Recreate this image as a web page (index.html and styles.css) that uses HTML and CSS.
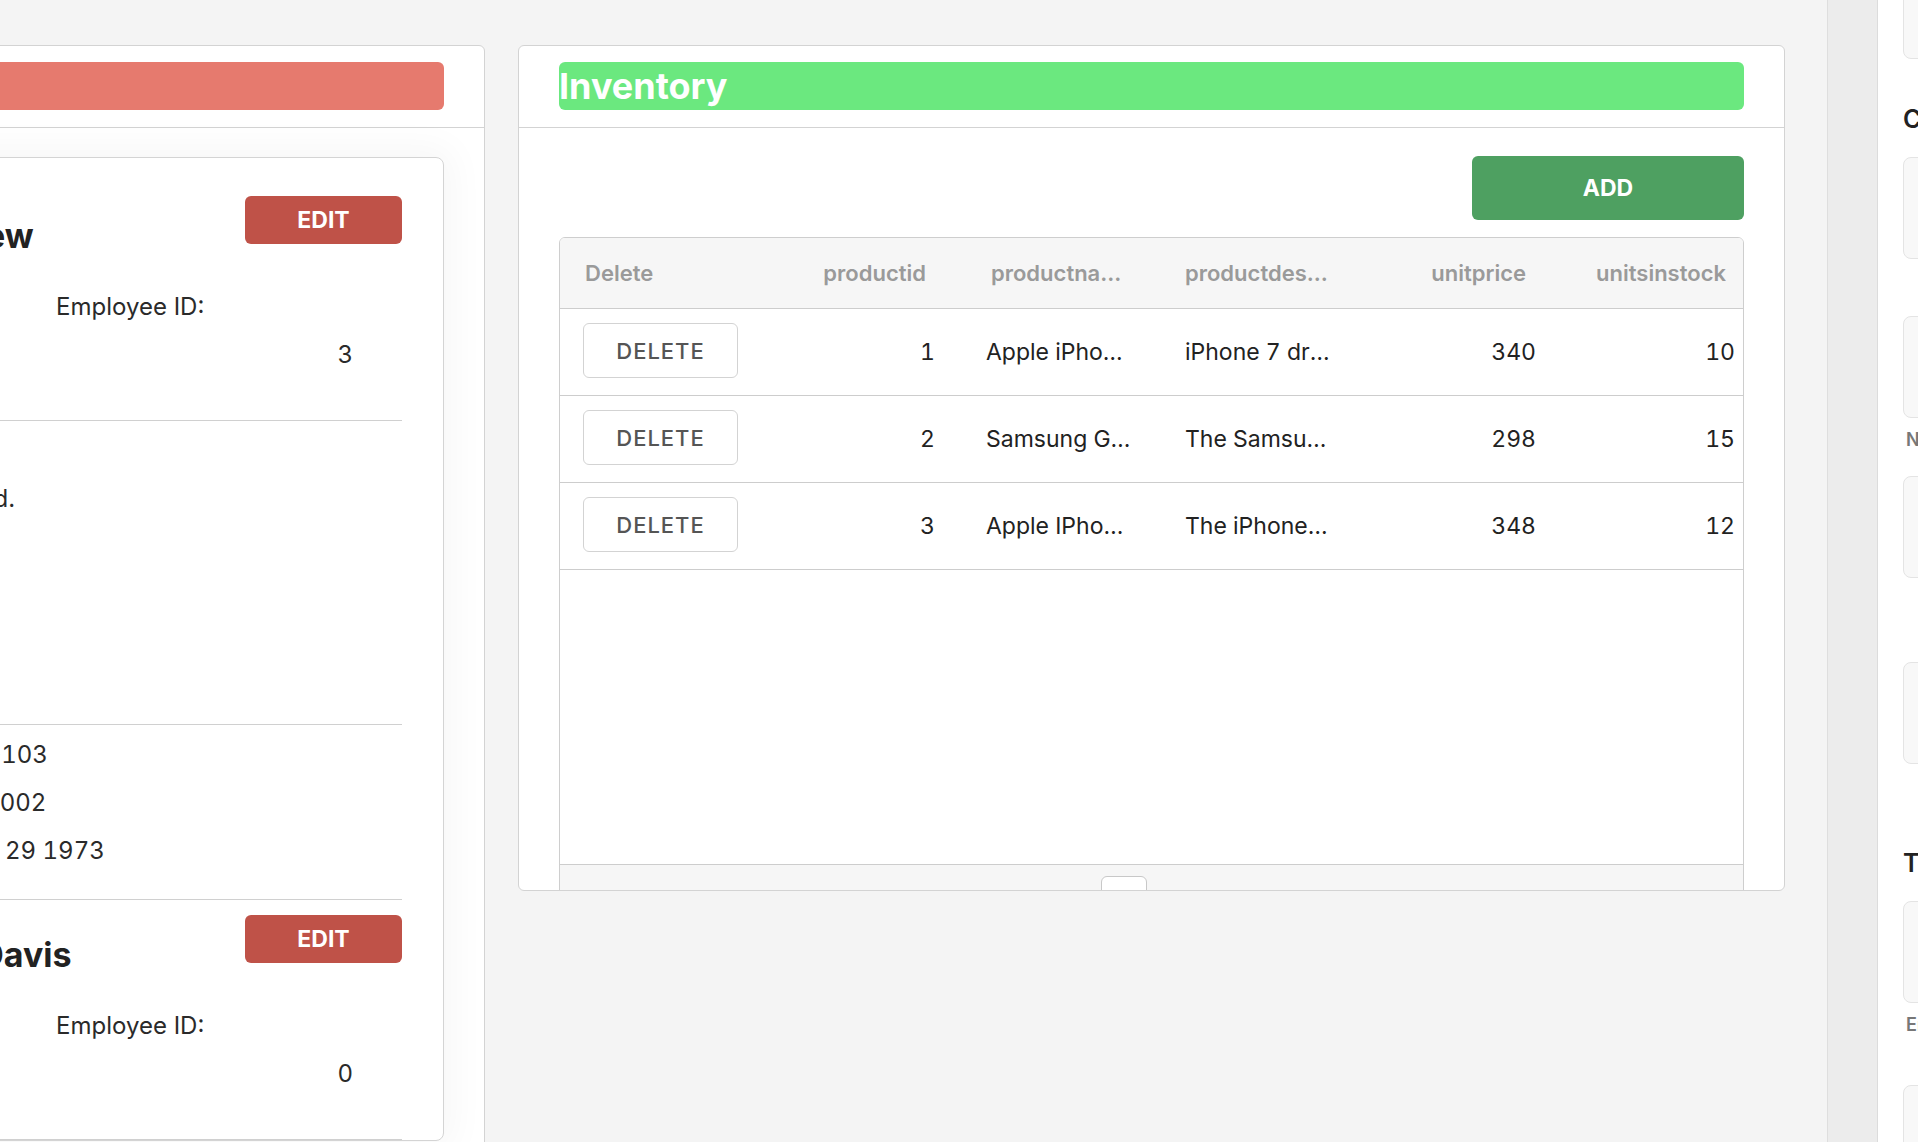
FILE: index.html
```html
<!DOCTYPE html>
<html lang="en">
<head>
<meta charset="utf-8">
<title>Dashboard</title>
<link rel="stylesheet" href="styles.css">
</head>
<body>
<div class="app">
  <main class="workspace">
    <section class="panel panel-employees">
      <header class="panel-head">
        <h2 class="panel-title red">Staff</h2>
      </header>
      <div class="panel-body">
        <div class="card">
          <article class="entry">
            <div class="entry-head">
              <h3 class="emp-name">Andrew</h3>
              <button class="btn btn-edit">EDIT</button>
            </div>
            <div class="emp-id"><span class="lbl">Employee ID:</span><span class="val">3</span></div>
            <hr class="rule">
            <div class="emp-notes"><p>Received.</p></div>
            <hr class="rule">
            <div class="emp-contact">
              <p>Office: 0103</p>
              <p>Home: 0002</p>
              <p>Thu Mar 29 1973</p>
            </div>
            <hr class="rule">
          </article>
          <article class="entry">
            <div class="entry-head">
              <h3 class="emp-name">Lisa Davis</h3>
              <button class="btn btn-edit">EDIT</button>
            </div>
            <div class="emp-id"><span class="lbl">Employee ID:</span><span class="val">0</span></div>
            <hr class="rule">
          </article>
        </div>
      </div>
    </section>

    <section class="panel panel-inventory">
      <header class="panel-head">
        <h2 class="panel-title green">Inventory</h2>
      </header>
      <div class="panel-body inv-body">
        <div class="toolbar"><button class="btn btn-add">ADD</button></div>
        <div class="grid">
          <div class="grid-row grid-header">
            <div class="c c1"><span class="t">Delete</span></div>
            <div class="c c2 num"><span class="t">productid</span></div>
            <div class="c c3"><span class="t">productname</span></div>
            <div class="c c4"><span class="t">productdescription</span></div>
            <div class="c c5 num"><span class="t">unitprice</span></div>
            <div class="c c6 num"><span class="t">unitsinstock</span></div>
          </div>
          <div class="grid-body">
            <div class="grid-row">
              <div class="c c1"><button class="btn btn-del">DELETE</button></div>
              <div class="c c2 num"><span class="t">1</span></div>
              <div class="c c3"><span class="t">Apple iPhone 7</span></div>
              <div class="c c4"><span class="t">iPhone 7 dramatically improves the most important aspects of the iPhone experience.</span></div>
              <div class="c c5 num"><span class="t">340</span></div>
              <div class="c c6 num"><span class="t">10</span></div>
            </div>
            <div class="grid-row">
              <div class="c c1"><button class="btn btn-del">DELETE</button></div>
              <div class="c c2 num"><span class="t">2</span></div>
              <div class="c c3"><span class="t">Samsung Galaxy S8</span></div>
              <div class="c c4"><span class="t">The Samsung Galaxy S8 is a smartphone with an infinity display.</span></div>
              <div class="c c5 num"><span class="t">298</span></div>
              <div class="c c6 num"><span class="t">15</span></div>
            </div>
            <div class="grid-row">
              <div class="c c1"><button class="btn btn-del">DELETE</button></div>
              <div class="c c2 num"><span class="t">3</span></div>
              <div class="c c3"><span class="t">Apple IPhone 8</span></div>
              <div class="c c4"><span class="t">The iPhone 8 introduces an all-new glass design.</span></div>
              <div class="c c5 num"><span class="t">348</span></div>
              <div class="c c6 num"><span class="t">12</span></div>
            </div>
          </div>
          <div class="grid-foot"><span class="thumb"></span></div>
        </div>
      </div>
    </section>
  </main>

  <div class="splitter"></div>

  <aside class="sidebar">
    <div class="sidebar-inner">
      <input class="field" aria-label="Notes">
      <h4 class="form-heading">Contact</h4>
      <input class="field" aria-label="Company">
      <input class="field field-gap" aria-label="Phone">
      <p class="helper">Numbers only</p>
      <input class="field field-gap2" aria-label="Address">
      <input class="field field-gap3" aria-label="City">
      <h4 class="form-heading heading-gap">Territory</h4>
      <input class="field" aria-label="Region">
      <p class="helper">Enter a region code</p>
      <input class="field field-gap4" aria-label="Postal code">
    </div>
  </aside>
</div>
</body>
</html>
```

FILE: styles.css
```css
* { box-sizing: border-box; }

html, body {
  margin: 0;
  padding: 0;
  height: 100%;
  overflow: hidden;
}

body {
  background: #f4f4f4;
  font-family: Inter, "Noto Sans", "Liberation Sans", sans-serif;
  color: #222;
}

.app {
  display: flex;
  align-items: stretch;
  height: 100vh;
  margin-left: -182px;
  width: max-content;
}

.workspace {
  width: 2009px;
  flex: none;
  padding: 45px 42px 0 0;
  display: flex;
  gap: 33px;
  align-items: flex-start;
}

/* panels */
.panel {
  background: #fff;
  border: 1px solid #d3d3d3;
  border-radius: 6px;
  overflow: hidden;
  flex: none;
}

.panel-employees { width: 667px; height: 1200px; }
.panel-inventory { width: 1267px; height: 846px; }

.panel-head {
  padding: 16px 40px 17px;
  border-bottom: 1px solid #d3d3d3;
}

.panel-title {
  margin: 0;
  height: 48px;
  border-radius: 6px;
  color: #fff;
  font-size: 36px;
  font-weight: 700;
  line-height: 48px;
  white-space: nowrap;
  overflow: hidden;
}

.panel-title.red { background: #e67a6e; }
.panel-title.green { background: #6be87f; }

.panel-body { padding: 29px 40px 0; }

/* employee card */
.card {
  border: 1px solid #d4d4d4;
  border-radius: 8px;
  background: #fff;
  padding: 23px 41px 0 44px;
  box-shadow: 0 0 36px 10px rgba(0, 0, 0, 0.035);
  font-size: 24px;
  line-height: 48px;
  color: #2a2a2a;
}

.entry { padding-top: 15px; }

.entry-head {
  display: flex;
  justify-content: space-between;
  align-items: flex-start;
  height: 60px;
}

.emp-name {
  margin: 20px 0 0;
  font-size: 34px;
  font-weight: 700;
  line-height: 40px;
  color: #222;
  white-space: nowrap;
}

.btn {
  font-family: inherit;
  cursor: pointer;
  border-radius: 6px;
}

.btn-edit {
  width: 157px;
  height: 48px;
  border: none;
  background: #bf5248;
  color: #fff;
  font-size: 23px;
  font-weight: 700;
  padding: 0;
}

.emp-id {
  margin: 27px 0 0 152px;
  width: 297px;
  display: flex;
  flex-direction: column;
}

.emp-id .val { text-align: right; font-variant-numeric: tabular-nums; }

.rule {
  margin: 41px 0 0;
  border: none;
  border-top: 1px solid #d0d0d0;
  height: 0;
}

.emp-notes {
  min-height: 303px;
  padding-top: 54px;
}

.emp-notes p, .emp-contact p { margin: 0; white-space: nowrap; }

.emp-contact p { font-variant-numeric: tabular-nums; }

.emp-notes + .rule { margin-top: 0; }

.emp-contact { padding: 6px 0 24px; }

.emp-contact + .rule { margin-top: 0; }

/* inventory */
.inv-body { padding: 28px 40px 0; }

.toolbar {
  display: flex;
  justify-content: flex-end;
}

.btn-add {
  width: 272px;
  height: 64px;
  border: none;
  background: #4ea061;
  color: #fff;
  font-size: 23px;
  font-weight: 700;
  padding: 0;
}

.grid {
  margin-top: 17px;
  width: 1185px;
  border: 1px solid #cecece;
  border-radius: 6px;
  overflow: hidden;
  font-size: 23px;
}

.grid-row {
  display: grid;
  grid-template-columns: 241px 175px 199px 200px 171px 197px;
  height: 87px;
  border-bottom: 1px solid #cdcdcd;
  align-items: center;
}

.grid-header {
  height: 71px;
  background: #f6f6f6;
  color: #9a9a9a;
  font-size: 22px;
  font-weight: 600;
  border-bottom: 1px solid #cdcdcd;
}

.grid-body { height: 555px; }

.c {
  min-width: 0;
  display: flex;
  align-items: center;
  height: 100%;
}

.c .t {
  display: block;
  white-space: nowrap;
  overflow: hidden;
  text-overflow: ellipsis;
  min-width: 0;
}

.grid-body .t { font-variant-numeric: tabular-nums; }

.num { justify-content: flex-end; }

.c1 { padding-left: 23px; }
.c2 { padding-right: 41px; }
.c3 { padding-left: 10px; padding-right: 41px; }
.c4 { padding-left: 10px; padding-right: 43px; }
.c5 { padding-right: 10px; }
.c6 { padding-right: 8px; }

.grid-header .c1 { padding-left: 25px; }
.grid-header .c2 { padding-right: 50px; }
.grid-header .c3 { padding-left: 15px; padding-right: 42px; }
.grid-header .c4 { padding-left: 10px; padding-right: 45px; }
.grid-header .c5 { padding-right: 20px; }
.grid-header .c6 { padding-right: 17px; }

.grid-body .grid-row { color: #222; }

.btn-del {
  width: 155px;
  height: 55px;
  margin-top: -3px;
  background: #fff;
  border: 1px solid #d3d3d3;
  color: #555;
  font-size: 22px;
  font-weight: 500;
  letter-spacing: 1px;
  padding: 0;
}

.grid-foot {
  border-top: 1px solid #cdcdcd;
  background: #f6f6f6;
  height: 70px;
  padding: 11px 0 0 541px;
}

.thumb {
  display: block;
  width: 46px;
  height: 30px;
  background: #fff;
  border: 1px solid #c8c8c8;
  border-radius: 6px;
}

/* splitter + sidebar */
.splitter {
  flex: none;
  width: 51px;
  background: #ececec;
  border-left: 1px solid #dedede;
  border-right: 1px solid #dcdcdc;
}

.sidebar {
  flex: none;
  width: 420px;
  background: #fff;
  padding: 0 24px 0 25px;
}

.sidebar-inner {
  margin-top: -43px;
  display: flex;
  flex-direction: column;
}

.field {
  display: block;
  width: 100%;
  height: 102px;
  border: 1px solid #e4e4e4;
  border-radius: 8px;
  background: #f8f8f8;
  font-family: inherit;
  font-size: 20px;
}

.form-heading {
  margin: 44px 0 22px;
  font-size: 25px;
  font-weight: 600;
  line-height: 32px;
  color: #222;
}

.heading-gap { margin-top: 83px; }

.field-gap { margin-top: 57px; }
.field-gap2 { margin-top: 22px; }
.field-gap3 { margin-top: 84px; }
.field-gap4 { margin-top: 46px; }

.helper {
  margin: 8px 0 0;
  padding-left: 3px;
  font-size: 18px;
  font-weight: 600;
  line-height: 28px;
  color: #777;
}
```
